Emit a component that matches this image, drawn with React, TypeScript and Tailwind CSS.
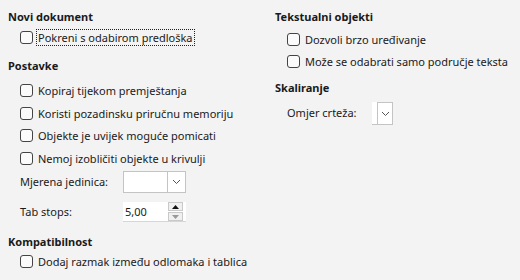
import React from "react";

function Check({ label, focus }: { label: string; focus?: boolean }) {
  return (
    <div className="flex items-center h-[22.5px] pl-[20px] whitespace-nowrap">
      <span className="w-[13px] h-[13px] rounded-[3px] border border-[#444] bg-[#fbfbfb] shrink-0" />
      <span
        className={
          "ml-[4px] leading-[15px] px-px " +
          (focus ? "outline-1 outline-dotted outline-[#222]" : "")
        }
      >
        {label}
      </span>
    </div>
  );
}

function Heading({ children }: { children: React.ReactNode }) {
  return <div className="font-bold pl-[8px] h-[18px] leading-[18px] whitespace-nowrap">{children}</div>;
}

function Chevron() {
  return (
    <svg width="9" height="6" viewBox="0 0 9 6">
      <path d="M1 1 L4.5 4.5 L8 1" fill="none" stroke="#555" strokeWidth="1" />
    </svg>
  );
}

export default function App() {
  return (
    <div
      className="w-[520px] h-[280px] bg-[#f3f3f3] text-[#1a1a1a] text-[11px] overflow-hidden"
      style={{ fontFamily: '"Noto Sans", "Open Sans", sans-serif' }}
    >
      <div className="grid grid-cols-[267px_253px]">
        <div className="pt-[8px]">
          <Heading>Novi dokument</Heading>
          <Check label="Pokreni s odabirom predloška" focus />
          <div className="h-[8px]" />
          <Heading>Postavke</Heading>
          <div className="h-[5px]" />
          <Check label="Kopiraj tijekom premještanja" />
          <Check label="Koristi pozadinsku priručnu memoriju" />
          <Check label="Objekte je uvijek moguće pomicati" />
          <Check label="Nemoj izobličiti objekte u krivulji" />
          <div className="flex items-center pl-[20px] h-[23px] mt-[1px]">
            <span className="w-[103px]">Mjerena jedinica:</span>
            <div className="flex w-[63px] h-[22px] bg-white border border-[#c4c4c4]">
              <div className="flex-1" />
              <div className="w-[18px] border-l border-[#c4c4c4] flex items-center justify-center">
                <Chevron />
              </div>
            </div>
          </div>
          <div className="flex items-center pl-[20px] h-[21px] mt-[8px]">
            <span className="w-[103px]">Tab stops:</span>
            <div className="flex w-[63px] h-[20px] bg-white border-b border-[#d6d6d6]">
              <div className="flex-1 pl-[2px] leading-[20px]">5,00</div>
              <div className="w-[15px] mr-[3px] flex flex-col justify-center gap-px">
                <div className="h-[9px] border border-[#c9c9c9] bg-[#f0f0f0] flex items-center justify-center">
                  <svg width="7" height="4" viewBox="0 0 7 4"><path d="M0 4 L3.5 0 L7 4 Z" fill="#111" /></svg>
                </div>
                <div className="h-[9px] border border-[#c9c9c9] bg-[#f0f0f0] flex items-center justify-center">
                  <svg width="7" height="4" viewBox="0 0 7 4"><path d="M0 0 L3.5 4 L7 0 Z" fill="#999" /></svg>
                </div>
              </div>
            </div>
          </div>
          <div className="h-[10px]" />
          <Heading>Kompatibilnost</Heading>
          <Check label="Dodaj razmak između odlomaka i tablica" />
        </div>
        <div className="pt-[8px]">
          <Heading>Tekstualni objekti</Heading>
          <div className="h-[2px]" />
          <Check label="Dozvoli brzo uređivanje" />
          <Check label="Može se odabrati samo područje teksta" />
          <div className="h-[6px]" />
          <Heading>Skaliranje</Heading>
          <div className="flex items-center pl-[20px] h-[23px] mt-[5px] whitespace-nowrap">
            <span className="w-[85px]">Omjer crteža:</span>
            <div className="flex h-[23px]">
              <div className="w-[5px] bg-white border-b border-[#c4c4c4]" />
              <div className="w-[16px] bg-white border border-[#c4c4c4] flex items-center justify-center">
                <Chevron />
              </div>
            </div>
          </div>
        </div>
      </div>
    </div>
  );
}
